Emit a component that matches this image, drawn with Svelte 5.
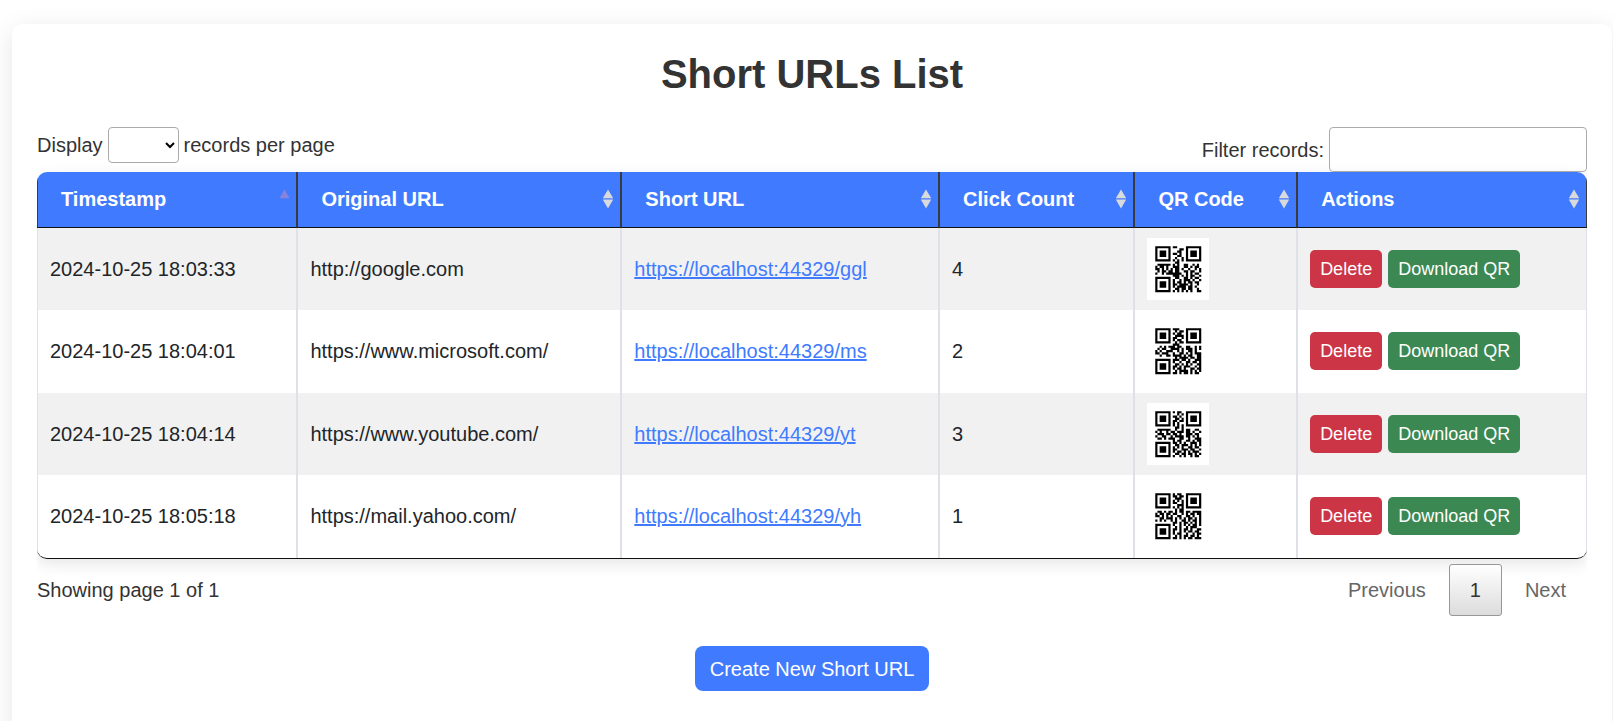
<script>
  const columns = [
    { label: 'Timestamp', width: 16.8, asc: true },
    { label: 'Original URL', width: 20.9 },
    { label: 'Short URL', width: 20.5 },
    { label: 'Click Count', width: 12.6 },
    { label: 'QR Code', width: 10.5 },
    { label: 'Actions', width: 18.7 }
  ];

  // Each code: middle strip of the top 8 rows, 5 full rows, then the right part of the last 8 rows.
  const rows = [
    {
      time: '2024-10-25 18:03:33', url: 'http://google.com', short: 'https://localhost:44329/ggl', clicks: 4,
      top: ['##...', '...##', '..##.', '##.#.', '..##.', '.#..#', '#.#.#', '.##..'],
      mid: ['.######.#.#..##..#.#.', '#.##.#..###..##.#.##.', '##.#.#.#.##.#..#..#.#', '.#.##.##.##..##.##..#', '#..#.#######..#.#.##.'],
      low: ['###.#.#.##..#', '.##..##.#.##.', '#..#.###.#..#', '#.##.#.##.##.', '##.####.#..#.', '#.####.##.#..', '.##.##.##..#.', '#.#.#.#.#..##']
    },
    {
      time: '2024-10-25 18:04:01', url: 'https://www.microsoft.com/', short: 'https://localhost:44329/ms', clicks: 2,
      top: ['###..', '.#.##', '#.##.', '.####', '##..#', '#.##.', '.#.##', '###..'],
      mid: ['..#.#.###.##..##..#.#', '.#.##..####.#.###.#.#', '#.#..###..#.#..##.#..', '##.###..#..##.#.#.###', '..#..##.####.#.##..##'],
      low: ['.#.####.##.##', '###.##.#..###', '#..#..##.##.#', '.##.#.#.#..##', '##.#.###..#.#', '#.##.#..##.##', '.#.####.#.#.#', '##.#.##.#.##.']
    },
    {
      time: '2024-10-25 18:04:14', url: 'https://www.youtube.com/', short: 'https://localhost:44329/yt', clicks: 3,
      top: ['#.##.', '..#.#', '##.#.', '.##.#', '##.##', '#.#..', '#.#.#', '.##.#'],
      mid: ['.######..#..#.##..##.', '#.#..#.##.###.##.#..#', '.###.##.##.#..###.##.', '#..##..#.####.##.#.#.', '.##.#.###..##..#..###'],
      low: ['#.##..##.#.##', '##.#.#..###.#', '.##.###.#.#.#', '#.#.#..##.##.', '##..###.##..#', '#.##.#.#.###.', '.##.##.##.#.#', '#..#.#..#.##.']
    },
    {
      time: '2024-10-25 18:05:18', url: 'https://mail.yahoo.com/', short: 'https://localhost:44329/yh', clicks: 1,
      top: ['#.##.', '##.##', '.###.', '#.#.#', '##..#', '..###', '#.#.#', '.#.##'],
      mid: ['.##.#.##.#.##.##.####', '#.##.##.##..#.#.##.##', '##.#.#.#..##..##.#..#', '..##.###.#.#.#.##.#.#', '#.#.#..#.#..##.#.##.#'],
      low: ['##.#.##.#.#.#', '#..#.#.#.##.#', '.#.#..#.###..', '##.#.##.#..##', '#..#.#.##.##.', '#.##..#..#.##', '.#.#.##.##.#.', '##.#.#.##.###']
    }
  ];

  function modules(code) {
    const strip = (line, x, y) => [...line].map((c, i) => (c === '#' ? `M${x + i} ${y}h1v1h-1z` : '')).join('');
    const finder = (x, y) => `M${x} ${y}h7v7h-7zM${x + 1} ${y + 1}v5h5v-5zM${x + 2} ${y + 2}h3v3h-3z`;
    return (
      finder(4, 4) + finder(18, 4) + finder(4, 18) +
      code.top.map((l, i) => strip(l, 12, 4 + i)).join('') +
      code.mid.map((l, i) => strip(l, 4, 12 + i)).join('') +
      code.low.map((l, i) => strip(l, 12, 17 + i)).join('')
    );
  }
</script>

<main class="card">
  <h1>Short URLs List</h1>

  <div class="bar">
    <label class="length">Display <select><option></option><option>10</option><option>25</option></select> records per page</label>
    <label class="filter">Filter records: <input type="search" /></label>
  </div>

  <div class="table-wrap">
    <table>
      <colgroup>
        {#each columns as col}<col style="width: {col.width}%" />{/each}
      </colgroup>
      <thead>
        <tr>
          {#each columns as col}
            <th scope="col">
              <div class="head">
                <span>{col.label}</span>
                <svg width="12" height="20" viewBox="0 0 12 20" aria-hidden="true">
                  {#if col.asc}
                    <path d="M6.5 .5L11.5 9.3H1.5z" fill="#8683dc" />
                  {:else}
                    <path d="M6 .5L11.2 9.2H.8zM.8 10.5H11.2L6 19.5z" fill="#d9dade" />
                  {/if}
                </svg>
              </div>
            </th>
          {/each}
        </tr>
      </thead>
      <tbody>
        {#each rows as row}
          <tr>
            <td>{row.time}</td>
            <td>{row.url}</td>
            <td><a href={row.short}>{row.short}</a></td>
            <td>{row.clicks}</td>
            <td>
              <svg class="qr" viewBox="0 0 62 62" role="img" aria-label="QR Code">
                <rect width="62" height="62" fill="#fff" />
                <path d={modules(row)} fill="#000" transform="translate(-.5 -.6) scale(2.19)" />
              </svg>
            </td>
            <td>
              <div class="actions">
                <button class="delete" type="button">Delete</button>
                <button class="download" type="button">Download QR</button>
              </div>
            </td>
          </tr>
        {/each}
      </tbody>
    </table>
  </div>

  <div class="foot">
    <div class="info">Showing page 1 of 1</div>
    <nav class="pages">
      <button type="button">Previous</button>
      <button type="button" class="current">1</button>
      <button type="button">Next</button>
    </nav>
  </div>

  <div class="create"><button type="button">Create New Short URL</button></div>
</main>

<style>
  :global(body) {
    background: #fff;
    overflow: hidden;
  }
  .card {
    box-sizing: border-box;
    min-height: 100vh;
    margin: 24px 1px 0 12px;
    padding: 25px 25px 30px;
    border-radius: 10px;
    background: #fff;
    box-shadow: 0 5px 25px rgba(0, 0, 0, 0.1);
    font-family: 'Liberation Sans', Arial, sans-serif;
    font-size: 20px;
    line-height: 30px;
    color: #333;
  }
  button,
  select,
  input {
    box-sizing: border-box;
    font: inherit;
  }
  h1 {
    margin: 0 0 28px;
    font-size: 40px;
    line-height: 50px;
    text-align: center;
  }
  .bar {
    display: flex;
    justify-content: space-between;
    align-items: flex-start;
  }
  .length,
  .filter {
    display: flex;
    align-items: center;
    gap: 5px;
  }
  select {
    width: 71px;
    height: 36px;
    padding: 4px;
    border: 1px solid #aaa;
    border-radius: 4px;
    background: #fff;
    color: #000;
  }
  input {
    width: 258px;
    height: 45px;
    padding: 6px;
    border: 1px solid #aaa;
    border-radius: 4px;
    background: transparent;
  }
  .table-wrap {
    overflow-x: clip;
  }
  table {
    width: 100%;
    table-layout: fixed;
    border-collapse: separate;
    border-spacing: 0;
    border-bottom: 1px solid #111;
    border-radius: 10px;
    overflow: hidden;
    box-shadow: 0 5px 15px rgba(0, 0, 0, 0.1);
  }
  th {
    padding: 12px 6px 13px 23px;
    border: solid #373b3e;
    border-width: 0 1px;
    border-bottom: 1px solid #111;
    background: #407bff;
    color: #fff;
    text-align: left;
  }
  .head {
    display: flex;
    align-items: center;
    justify-content: space-between;
  }
  td {
    height: 62px;
    padding: 10px 12px;
    border: solid #dee2e6;
    border-width: 0 1px;
    color: #212529;
    vertical-align: middle;
  }
  tbody tr:nth-child(odd) td {
    background: #f1f1f1;
  }
  tbody tr:nth-child(even) td {
    padding-bottom: 11px;
  }
  td a {
    color: #407bff;
  }
  .qr {
    display: block;
    width: 62px;
    height: 62px;
  }
  .actions {
    display: flex;
    gap: 6px;
  }
  .actions button {
    height: 38px;
    padding: 0 10px;
    border: 0;
    border-radius: 5px;
    color: #fff;
    font-size: 18px;
    white-space: nowrap;
  }
  .actions .delete {
    background: #cb3546;
  }
  .actions .download {
    background: #3b8853;
  }
  .foot {
    display: flex;
    justify-content: space-between;
    align-items: center;
    padding-top: 5px;
  }
  .pages {
    display: flex;
    gap: 2px;
  }
  .pages button {
    padding: 10px 20px;
    border: 1px solid transparent;
    border-radius: 3px;
    background: none;
    color: #666;
  }
  .pages .current {
    border-color: #979797;
    background: linear-gradient(#fff, #dcdcdc);
    color: #333;
  }
  .create {
    display: flex;
    justify-content: center;
    margin-top: 30px;
  }
  .create button {
    height: 45px;
    padding: 0 15px;
    border: 0;
    border-radius: 8px;
    background: #407bff;
    color: #fff;
  }
</style>
